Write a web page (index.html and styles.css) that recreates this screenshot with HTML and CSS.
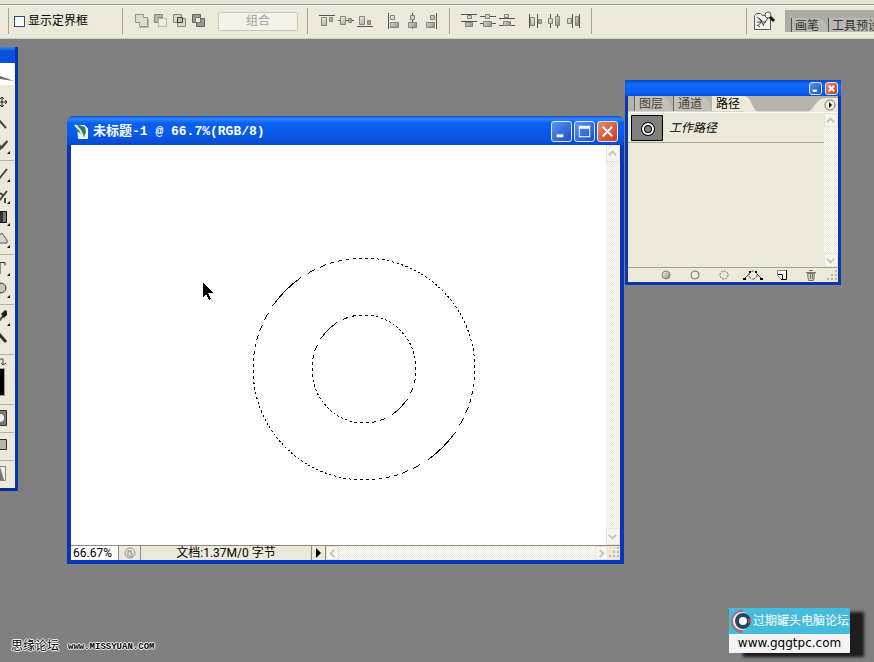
FILE: index.html
```html
<!DOCTYPE html>
<html lang="zh-CN">
<head>
  <meta charset="UTF-8">
  <title>未标题-1</title>
  <link rel="stylesheet" href="styles.css">
</head>
<body>
  <svg class="defs" aria-hidden="true">
    <defs>
      <linearGradient id="metal" x1="0" y1="0" x2="1" y2="1">
        <stop offset="0" stop-color="#f4f3e8"/>
        <stop offset="1" stop-color="#8f8e84"/>
      </linearGradient>
      <!-- 蚂蚁线:斜向条纹 -->
      <linearGradient id="ants" gradientUnits="userSpaceOnUse" x1="0" y1="0" x2="3" y2="3" spreadMethod="repeat">
        <stop offset="0.5" stop-color="#000"/>
        <stop offset="0.5" stop-color="#fff"/>
      </linearGradient>
      <linearGradient id="ants-inner" gradientUnits="userSpaceOnUse" x1="1" y1="2" x2="4" y2="5" spreadMethod="repeat">
        <stop offset="0.5" stop-color="#000"/>
        <stop offset="0.5" stop-color="#fff"/>
      </linearGradient>
      <symbol id="up" viewBox="0 0 12 12"><path d="M2 8l4-4 4 4" fill="none" stroke="#c4c4bc" stroke-width="2"/></symbol>
      <symbol id="down" viewBox="0 0 12 12"><path d="M2 4l4 4 4-4" fill="none" stroke="#c4c4bc" stroke-width="2"/></symbol>
      <symbol id="left" viewBox="0 0 12 12"><path d="M8 2L4 6l4 4" fill="none" stroke="#c4c4bc" stroke-width="2"/></symbol>
      <symbol id="right" viewBox="0 0 12 12"><path d="M4 2l4 4-4 4" fill="none" stroke="#c4c4bc" stroke-width="2"/></symbol>
      <symbol id="grip" viewBox="0 0 12 12"><path d="M9 1h2v2H9zM9 5h2v2H9zM9 9h2v2H9zM5 5h2v2H5zM5 9h2v2H5zM1 9h2v2H1z" fill="#bdbaa8"/></symbol>
    </defs>
  </svg>

  <header class="options-bar">
    <label class="bounding-box"><input type="checkbox"> 显示定界框</label>
    <div class="group path-ops">
      <button class="icon-btn" aria-label="添加"><svg viewBox="0 0 16 16"><path d="M1.5 1.5h8v3h4v9h-8v-4h-4z" fill="#dddbcd" stroke="#96958a"/><path d="M6 14.5h8.500V6" fill="none" stroke="#b5b3a6"/></svg></button>
      <button class="icon-btn" aria-label="减去"><svg viewBox="0 0 16 16"><path d="M1.5 9.5v-8h8v3h-4v5z" fill="#b8b6a8" stroke="#88877c"/><path d="M5.5 5.5h8v8h-8z" fill="#eeecdf" stroke="#bbb9ab"/></svg></button>
      <button class="icon-btn" aria-label="交叉"><svg viewBox="0 0 16 16"><path d="M1.5 1.5h8v8h-8zM5.5 5.5h8v8h-8z" fill="#d8d6c8" stroke="#88877c"/><path d="M5.5 4.5h5v5h-5z" fill="#c0beb0" stroke="#3c3c36"/></svg></button>
      <button class="icon-btn" aria-label="排除"><svg viewBox="0 0 16 16"><path d="M1.5 1.5h8v8h-8zM5.5 5.5h8v8h-8z" fill="#9a988c" stroke="#66655c"/><path d="M4.5 4.5h5v5h-5z" fill="#e8e6d8" stroke="#77766c"/></svg></button>
      <button class="combine" disabled>组合</button>
    </div>
    <div class="group">
      <button class="icon-btn" aria-label="顶对齐"><svg viewBox="0 0 16 16"><path d="M0 2.5h16" stroke="#55544c"/><path d="M2.5 4.5h5v8h-5zM10.5 4.5h3v4h-3z" fill="url(#metal)" stroke="#85847a"/></svg></button>
      <button class="icon-btn" aria-label="垂直居中"><svg viewBox="0 0 16 16"><path d="M0 7.5h16" stroke="#55544c"/><path d="M2.5 3.5h5v8h-5zM10.5 5.5h3v4h-3z" fill="url(#metal)" stroke="#85847a"/></svg></button>
      <button class="icon-btn" aria-label="底对齐"><svg viewBox="0 0 16 16"><path d="M0 13.5h16" stroke="#55544c"/><path d="M2.5 3.5h5v8h-5zM10.5 7.5h3v4h-3z" fill="url(#metal)" stroke="#85847a"/></svg></button>
      <span class="space"></span>
      <button class="icon-btn" aria-label="左对齐"><svg viewBox="0 0 16 16"><path d="M2.5 0v16" stroke="#55544c"/><path d="M4.5 2.5h4v4h-4zM4.5 9.5h8v5h-8z" fill="url(#metal)" stroke="#85847a"/></svg></button>
      <button class="icon-btn" aria-label="水平居中"><svg viewBox="0 0 16 16"><path d="M7.5 0v16" stroke="#55544c"/><path d="M5.5 2.5h4v4h-4zM3.5 9.5h8v5h-8z" fill="url(#metal)" stroke="#85847a"/></svg></button>
      <button class="icon-btn" aria-label="右对齐"><svg viewBox="0 0 16 16"><path d="M12.5 0v16" stroke="#55544c"/><path d="M6.5 2.5h4v4h-4zM2.5 9.5h8v5h-8z" fill="url(#metal)" stroke="#85847a"/></svg></button>
    </div>
    <div class="group">
      <button class="icon-btn" aria-label="按顶分布"><svg viewBox="0 0 16 16"><path d="M0 1.5h16M0 8.5h16" stroke="#55544c"/><path d="M6.5 2.5h4v3h-4zM4.5 9.5h7v4h-7z" fill="url(#metal)" stroke="#85847a"/></svg></button>
      <button class="icon-btn" aria-label="垂直分布"><svg viewBox="0 0 16 16"><path d="M0 3.5h16M0 10.5h16" stroke="#55544c"/><path d="M5.5 1.5h4v4h-4zM3.5 8.5h8v5h-8z" fill="url(#metal)" stroke="#85847a"/></svg></button>
      <button class="icon-btn" aria-label="按底分布"><svg viewBox="0 0 16 16"><path d="M0 5.5h16M0 12.5h16" stroke="#55544c"/><path d="M5.5 1.5h4v3h-4zM4.5 8.5h7v4h-7z" fill="url(#metal)" stroke="#85847a"/></svg></button>
      <span class="space"></span>
      <button class="icon-btn" aria-label="按左分布"><svg viewBox="0 0 16 16"><path d="M1.5 1v14M9.5 1v14" stroke="#55544c"/><path d="M2.5 4.5h4v8h-4zM10.5 6.5h3v4h-3z" fill="url(#metal)" stroke="#85847a"/></svg></button>
      <button class="icon-btn" aria-label="水平分布"><svg viewBox="0 0 16 16"><path d="M3.5 1v14M10.5 1v14" stroke="#55544c"/><path d="M1.5 5.5h4v5h-4zM8.500 3.5h4v9h-4z" fill="url(#metal)" stroke="#85847a"/></svg></button>
      <button class="icon-btn" aria-label="按右分布"><svg viewBox="0 0 16 16"><path d="M6.5 1v14M13.5 1v14" stroke="#55544c"/><path d="M1.5 5.5h4v5h-4zM9.5 3.5h3v9h-3z" fill="url(#metal)" stroke="#85847a"/></svg></button>
    </div>
    <div class="group rest"></div>
    <div class="group browse">
      <button class="browse-btn" aria-label="文件浏览器"><svg viewBox="0 0 24 22"><path d="M2.5 5.5l2-2h4l2 2h8v14h-16z" fill="#f2f1ea" stroke="#55555a"/><path d="M5 7l5 4-4 5M11 15l5-7M7 8l5 8M5 12h9M8 17l-3-2" stroke="#44444c" fill="none"/><circle cx="16" cy="5" r="3" fill="#f8f8f4" stroke="#555"/><path d="M18 7l4 4" stroke="#111" stroke-width="3"/></svg></button>
    </div>
    <nav class="well">
      <button>画笔</button>
      <button>工具预设</button>
    </nav>
  </header>

  <main class="desktop">
    <aside class="toolbox">
      <div class="tb-title"></div>
      <div class="tb-logo"><svg viewBox="0 0 14 20"><path d="M0 13l14 5-14-2z" fill="#667"/></svg></div>
      <div class="tools">
        <button aria-label="移动"><svg viewBox="0 0 14 20"><path d="M-4 9H7M2 4v10M5 7l2 2-2 2M0 6l2-2 2 2M0 12l2 2 2-2" stroke="#222" fill="none"/></svg></button>
        <button aria-label="魔棒"><svg viewBox="0 0 14 20"><path d="M-2 4l8 9" stroke="#444" stroke-width="2"/></svg></button>
        <button class="more" aria-label="切片"><svg viewBox="0 0 14 20"><path d="M-1 5l2 4 6-6 1 2-5 6-4 3z" fill="#45453f"/></svg></button>
      </div>
      <div class="tools">
        <button class="more" aria-label="画笔"><svg viewBox="0 0 14 20"><path d="M-1 14L7 4" stroke="#444" stroke-width="2"/></svg></button>
        <button class="more" aria-label="历史画笔"><svg viewBox="0 0 14 20"><path d="M-1 14L7 4M0 6l3 2M5 11v5" fill="none" stroke="#444" stroke-width="2"/></svg></button>
        <button class="more" aria-label="渐变"><svg viewBox="0 0 14 20"><path d="M-5 2.5H6.5v11H-5z" fill="#333" stroke="#111"/><path d="M3 3h3v10H3z" fill="#777"/></svg></button>
        <button class="more" aria-label="减淡"><svg viewBox="0 0 14 20"><path d="M-2 12V5l4-3 5 7v3z" fill="#d2d4d2" stroke="#555"/></svg></button>
      </div>
      <div class="tools">
        <button class="more" aria-label="文字"><svg viewBox="0 0 14 20"><path d="M-5 3.5h10v3M0 4v11" fill="none" stroke="#333"/></svg></button>
        <button class="more" aria-label="形状"><svg viewBox="0 0 14 20"><ellipse cx="0" cy="7" rx="6" ry="5" fill="#c4c4bc" stroke="#333"/></svg></button>
      </div>
      <div class="tools">
        <button class="more" aria-label="吸管"><svg viewBox="0 0 14 20"><path d="M-2 13L4 6" stroke="#444" stroke-width="2"/><path d="M1 5l4-4 2 1v4l-3 3z" fill="#222"/></svg></button>
        <button aria-label="缩放"><svg viewBox="0 0 14 20"><path d="M-1 3l7 8" stroke="#333" stroke-width="3"/></svg></button>
      </div>
      <div class="colors">
        <svg viewBox="0 0 14 12"><path d="M-2 2h5v6M1 6l2 2 3-2" fill="none" stroke="#444"/></svg>
        <span class="swatch"></span>
      </div>
      <div class="tools"><button aria-label="快速蒙版"><svg viewBox="0 0 14 20"><path d="M-2 1.5H6.5v15H-2z" fill="#777" stroke="#333"/><circle cx="0" cy="9" r="4" fill="#eee"/></svg></button></div>
      <div class="tools"><button aria-label="屏幕模式"><svg viewBox="0 0 14 20"><path d="M-2 2.5H6.5v10H-2z" fill="#b4b4ac" stroke="#333"/></svg></button></div>
      <div class="tools"><button aria-label="转到"><svg viewBox="0 0 14 20"><path d="M-2 1.5H5.5v14H-2z" fill="#eee" stroke="#888"/><path d="M0 2l4 13H0z" fill="#777"/></svg></button></div>
    </aside>

    <section class="window document">
      <div class="title-bar">
        <svg class="doc-icon" viewBox="0 0 16 16"><path d="M3.5 1.5h7l3 3v10h-9z" fill="#eaf3ee" stroke="#fff"/><path d="M1 3l4-2 6 2 1 5-2 5-4-4-4-2z" fill="#2a776f"/><path d="M1 1l5 5 3 6" fill="none" stroke="#d5efe6" stroke-width="2"/></svg>
        <h1>未标题-1 @ 66.7%(RGB/8)</h1>
        <button class="win-btn" aria-label="最小化"><svg viewBox="0 0 20 20"><path d="M5 13h7v3H5z" fill="#fff"/></svg></button>
        <button class="win-btn" aria-label="最大化"><svg viewBox="0 0 20 20"><path d="M4 4h12v12H4zM5 7v8h10V7z" fill="#fff" fill-rule="evenodd"/></svg></button>
        <button class="win-btn close" aria-label="关闭"><svg viewBox="0 0 20 20"><path d="M5 5l10 10M15 5L5 15" stroke="#fff" stroke-width="2"/></svg></button>
      </div>
      <div class="doc-body">
        <svg class="canvas" viewBox="0 0 535 400" shape-rendering="crispEdges">
          <circle cx="293" cy="224" r="111" fill="none" stroke="url(#ants)"/>
          <ellipse cx="293" cy="224" rx="52" ry="54" fill="none" stroke="url(#ants-inner)"/>
          <path d="M132 138v14l3-3 3 6 2-1-3-6h5z" fill="#000"/>
        </svg>
        <div class="scroll vertical">
          <button aria-label="向上"><svg><use href="#up"/></svg></button>
          <button aria-label="向下"><svg><use href="#down"/></svg></button>
        </div>
      </div>
      <div class="status-bar">
        <input class="zoom" aria-label="缩放比例" value="66.67%">
        <span class="version"><svg viewBox="0 0 14 14"><circle cx="7" cy="7" r="5" fill="#e6e4da" stroke="#99988e"/><path d="M5 10V5h3M8 5v3h2M6 10h4" fill="none" stroke="#88877c"/></svg></span>
        <span class="doc-size">文档:1.37M/0 字节</span>
        <button class="play" aria-label="菜单"><svg viewBox="0 0 12 12"><path d="M4 1l5 5-5 5z"/></svg></button>
        <div class="scroll horizontal">
          <button aria-label="向左"><svg><use href="#left"/></svg></button>
          <button aria-label="向右"><svg><use href="#right"/></svg></button>
        </div>
        <svg class="grip"><use href="#grip"/></svg>
      </div>
    </section>

    <section class="window panel">
      <div class="panel-title">
        <button class="win-btn" aria-label="最小化"><svg viewBox="0 0 20 20"><path d="M5 12h8v4H5z" fill="#fff"/></svg></button>
        <button class="win-btn close" aria-label="关闭"><svg viewBox="0 0 20 20"><path d="M5 5l10 10M15 5L5 15" stroke="#fff" stroke-width="4"/></svg></button>
      </div>
      <div class="tabs">
        <button class="tab">图层</button>
        <button class="tab">通道</button>
        <button class="tab active">路径</button>
        <svg class="slope" viewBox="0 0 16 16"><path d="M0 0c8 0 8 16 16 16H0z" fill="#ece9d8"/></svg>
        <button class="panel-menu" aria-label="面板菜单"><svg viewBox="0 0 32 16"><path d="M0 16C8 16 9 2 20 2h12v14z" fill="#ece9d8"/><circle cx="24" cy="9" r="5" fill="#f4f2ea" stroke="#777"/><path d="M23 6l3 3-3 3z"/></svg></button>
      </div>
      <div class="panel-body">
        <div class="path-list">
          <div class="path-row">
            <svg class="thumb" viewBox="0 0 32 26"><path d="M.5.5h31v25H.5z" fill="#808080" stroke="#000"/><circle cx="17" cy="14" r="5" fill="none" stroke="#000" stroke-width="4"/><circle cx="17" cy="14" r="5" fill="none" stroke="#fff" stroke-width="2"/></svg>
            <span>工作路径</span>
          </div>
        </div>
        <div class="scroll vertical">
          <button aria-label="向上"><svg><use href="#up"/></svg></button>
          <button aria-label="向下"><svg><use href="#down"/></svg></button>
        </div>
      </div>
      <div class="panel-footer">
        <button aria-label="填充路径"><svg viewBox="0 0 20 14"><circle cx="10" cy="7" r="4" fill="url(#metal)" stroke="#85847a"/></svg></button>
        <button aria-label="描边路径"><svg viewBox="0 0 20 14"><circle cx="10" cy="7" r="4" fill="#f0eee2" stroke="#77766e"/></svg></button>
        <button aria-label="载入选区"><svg viewBox="0 0 20 14"><circle cx="10" cy="7" r="4" fill="none" stroke="#77766e" stroke-dasharray="2 1"/></svg></button>
        <button aria-label="生成路径"><svg viewBox="0 0 20 14"><path d="M1 11l5-5M19 11l-5-5" stroke="#333"/><circle cx="10" cy="7" r="4" fill="#eee" stroke="#55544c" stroke-dasharray="3 1"/><path d="M0 10h3v2H0zM17 10h3v2h-3zM6 3h2v2H6zM12 3h2v2h-2z"/></svg></button>
        <button aria-label="新建路径"><svg viewBox="0 0 20 14"><path d="M5.5 2.5h9v9h-5l-4-4z" fill="#fff" stroke="#88877c"/><path d="M14.5 2v9.500H9M6 6.500h4.500V11" fill="none" stroke="#000"/></svg></button>
        <button aria-label="删除路径"><svg viewBox="0 0 20 14"><path d="M6.5 5.5h7l-1 7h-5zM5 4.5h10M8 2.5h4M9.5 6v5M11.5 6v5" fill="#d0cec2" stroke="#77766c"/></svg></button>
        <svg class="grip"><use href="#grip"/></svg>
      </div>
    </section>
  </main>

  <footer class="credits">
    <span>思缘论坛</span>
    <a href="#missyuan">www.MISSYUAN.COM</a>
  </footer>

  <a class="forum" href="#gqgtpc">
    <span class="forum-name"><svg viewBox="0 0 24 24"><path d="M14 2a10 10 0 1 0 0 21" fill="none" stroke="#a8707c" stroke-width="3"/><circle cx="13" cy="12" r="9" fill="#f4f8fa"/><circle cx="14" cy="12" r="6" fill="#fff" stroke="#24495c" stroke-width="4"/><path d="M19 10h3v4h-3z" fill="#c04858"/></svg>过期罐头电脑论坛</span>
    <span class="forum-url">www.gqgtpc.com</span>
  </a>
</body>
</html>
```

FILE: styles.css
```css
* {
  box-sizing: border-box;
}

body {
  margin: 0;
  min-height: 100vh;
  background: #808080;
  font-family: Roboto, "Noto Sans CJK SC", sans-serif;
  font-size: 12px;
  line-height: 16px;
  color: #000;
  overflow: hidden;
}

button {
  margin: 0;
  padding: 0;
  border: none;
  background: none;
  font: inherit;
  color: inherit;
}

svg {
  display: block;
}

.defs {
  position: absolute;
  width: 0;
  height: 0;
}

/* 选项栏 */
.options-bar {
  display: flex;
  height: 39px;
  padding: 4px 0 3px 8px;
  background: linear-gradient(#e6e3d4 4px, #96958a 4px, #96958a 5px, #fbfaf0 5px, #fbfaf0 6px, #ece9d8 6px);
  border-bottom: 1px solid #d2cfc0;
}

.bounding-box,
.group {
  display: flex;
  align-items: center;
  margin-top: 4px;
  height: 26px;
  border-left: 1px solid #a5a395;
  padding-left: 11px;
  white-space: nowrap;
}

.bounding-box {
  width: 114px;
  padding-left: 5px;
  gap: 3px;
}

.bounding-box input {
  appearance: none;
  width: 11px;
  height: 11px;
  margin: 0;
  border: 1px solid #1c5180;
  background: #f8f8f6;
}

.group {
  gap: 3px;
  padding-right: 9px;
}

.path-ops {
  width: 185px;
}

.icon-btn {
  width: 16px;
  height: 16px;
}

.space {
  width: 7px;
}

.combine {
  width: 80px;
  height: 19px;
  margin-left: 8px;
  border: 1px solid #cbc8b8;
  border-radius: 2px;
  background: #f4f2e8;
  color: #a5a395;
}

.rest {
  flex: 1;
}

.browse {
  padding: 0 6px 0 5px;
}

.browse-btn {
  width: 24px;
  height: 22px;
}

.well {
  display: flex;
  align-items: flex-end;
  width: 89px;
  height: 22px;
  margin: 6px 0 0 3px;
  background: #acaba8;
  overflow: hidden;
  white-space: nowrap;
}

.well button {
  height: 14px;
  padding: 0 9px 0 3px;
  margin-left: 6px;
  border-left: 1px solid #55544c;
  border-top-right-radius: 12px;
  background: #b9b8b2;
  color: #33332f;
  flex: none;
}

.well button + button {
  margin-left: 0;
}

/* 工具箱 */
.toolbox {
  position: absolute;
  left: 0;
  top: 47px;
  width: 18px;
  padding-right: 1px;
  border-right: 3px solid #0a36a8;
  border-bottom: 3px solid #0a2a8c;
  background: #ece9d8;
}

.tb-title {
  height: 16px;
  margin-right: -1px;
  background: linear-gradient(#3a86f4, #0a50dc 4px, #0a50dc);
}

.tb-logo {
  height: 22px;
  background: #fff;
}

.tb-logo svg {
  width: 14px;
  height: 20px;
}

.tools {
  padding: 3px 0 2px;
  border-bottom: 1px solid #b5b2a2;
}

.tools button {
  display: block;
  position: relative;
  width: 13px;
  height: 22px;
}

.tools svg {
  width: 14px;
  height: 20px;
}

.tb-logo + .tools {
  padding-top: 7px;
}

.tools:last-child {
  border-bottom: none;
}

.more::after {
  content: "";
  position: absolute;
  right: 3px;
  bottom: 4px;
  border-left: 3px solid transparent;
  border-bottom: 3px solid #000;
}

.colors {
  height: 50px;
  padding-top: 2px;
  border-bottom: 1px solid #b5b2a2;
}

.colors svg {
  width: 14px;
  height: 12px;
}

.swatch {
  display: block;
  width: 4px;
  height: 26px;
  background: #000;
  outline: 1px solid #999;
}

/* 窗口 */
.window {
  position: absolute;
  display: flex;
  flex-direction: column;
  border: 3px solid #0a36b4;
  border-top: none;
}

.document {
  left: 67px;
  top: 116px;
  width: 557px;
  height: 448px;
  border-width: 0 4px 4px;
  border-radius: 7px 7px 0 0;
  background: #0a36b4;
}

.title-bar {
  display: flex;
  align-items: center;
  gap: 3px;
  height: 29px;
  margin: 0 -4px;
  padding: 2px 6px 0 7px;
  border-radius: 7px 7px 0 0;
  background: linear-gradient(#0a50d8, #3088f8 3px, #0860f0 7px, #0858e8 20px, #0a48cc);
}

.doc-icon {
  width: 16px;
  height: 16px;
}

h1 {
  flex: 1;
  margin: 0;
  font: bold 13px/16px "Liberation Mono", "Noto Sans CJK SC", monospace;
  color: #fff;
  white-space: nowrap;
}

.win-btn {
  width: 21px;
  height: 21px;
  border: 1px solid #dfe8fa;
  border-radius: 3px;
  background: linear-gradient(135deg, #5c94f0, #1c4cc8);
}

.win-btn.close {
  background: linear-gradient(135deg, #e88c6c, #c43c1c);
}

.win-btn + .win-btn {
  margin-left: -1px;
}

.doc-body {
  flex: 1;
  display: flex;
  min-height: 0;
  background: #fff;
}

.canvas {
  flex: 1;
  min-width: 0;
}

.scroll {
  display: flex;
  justify-content: space-between;
  background: repeating-conic-gradient(#fff 0 25%, #e9e7da 0 50%) 0 0 / 2px 2px;
}

.scroll button {
  width: 13px;
  height: 14px;
  padding: 1px 0;
  border: 1px solid #e6e4da;
  background: #f6f5f0;
}

.scroll svg {
  width: 11px;
  height: 11px;
}

.vertical {
  flex-direction: column;
  width: 14px;
}

.vertical button {
  width: 14px;
}

.doc-body .vertical button {
  height: 17px;
}

.horizontal {
  flex: 1;
}

.grip {
  width: 12px;
  height: 12px;
}

.status-bar {
  display: flex;
  height: 15px;
  border-top: 1px solid #8c8b80;
  background: #ece9d8;
  line-height: 14px;
}

.zoom {
  width: 48px;
  padding: 0 2px;
  border: none;
  border-right: 1px solid #8c8b80;
  background: #fff;
  font: inherit;
}

.version {
  width: 22px;
  padding-left: 4px;
  border-right: 1px solid #8c8b80;
}

.version svg {
  width: 14px;
  height: 14px;
}

.doc-size {
  width: 171px;
  border-right: 1px solid #8c8b80;
  text-align: center;
  white-space: nowrap;
}

.play {
  width: 14px;
  border-right: 1px solid #8c8b80;
}

.play svg {
  width: 12px;
  height: 12px;
}

/* 路径面板 */
.panel {
  left: 625px;
  top: 80px;
  width: 216px;
  height: 205px;
  background: #ece9d8;
}

.panel-title {
  display: flex;
  justify-content: flex-end;
  align-items: center;
  gap: 4px;
  height: 16px;
  margin: 0 -3px;
  padding-right: 3px;
  background: linear-gradient(#0a48c8, #0c68f8 4px, #0a60f0 12px, #0a50dc);
}

.panel-title .win-btn {
  width: 13px;
  height: 13px;
}

.tabs {
  display: flex;
  height: 16px;
  padding-left: 6px;
  background: #b4b3ae;
  border-bottom: 1px solid #d8d6c8;
  line-height: 17px;
}

.tab {
  width: 38px;
  padding-left: 4px;
  border-left: 1px solid #66655c;
  border-top-right-radius: 14px;
  background: #c2c0b8;
  color: #44443e;
  text-align: left;
}

.tab + .tab {
  margin-left: 1px;
}

.tab.active {
  width: 32px;
  border-left: 0;
  border-radius: 0;
  background: #ece9d8;
  color: #000;
}

.slope {
  width: 16px;
  height: 16px;
}

.panel-menu {
  margin-left: auto;
}

.panel-menu svg {
  width: 32px;
  height: 16px;
}

.panel-body {
  flex: 1;
  display: flex;
  border-top: 1px solid #fbfaf2;
}

.path-list {
  flex: 1;
}

.path-row {
  display: flex;
  align-items: center;
  gap: 6px;
  height: 30px;
  padding: 0 3px;
  border-bottom: 1px solid #a5a395;
  font-style: italic;
}

.thumb {
  width: 32px;
  height: 26px;
}

.panel-footer {
  display: flex;
  align-items: center;
  justify-content: flex-end;
  gap: 9px;
  height: 15px;
  border-top: 1px solid #a5a395;
}

.panel-footer button,
.panel-footer button svg {
  width: 20px;
  height: 14px;
}

.panel-footer .grip {
  margin-left: -4px;
}

/* 水印 */
.credits {
  position: absolute;
  left: 11px;
  bottom: 6px;
  display: flex;
  gap: 9px;
  color: #000;
  text-shadow: 1px 0 #fff, -1px 0 #fff, 0 1px #fff, 0 -1px #fff;
}

.credits a {
  color: #000;
  text-decoration: none;
  font: bold 9px/18px "Liberation Mono", monospace;
}

.forum {
  position: absolute;
  right: 24px;
  bottom: 9px;
  width: 121px;
  color: #000;
  text-decoration: none;
  white-space: nowrap;
  box-shadow: 14px 4px 3px #1c1c1c;
}

.forum-name {
  display: flex;
  align-items: center;
  height: 26px;
  background: #46bcdc;
  color: #fff;
  line-height: 28px;
}

.forum-name svg {
  width: 24px;
  height: 24px;
}

.forum-url {
  display: block;
  height: 19px;
  background: #f4f4f4;
  font: 12px/19px "DejaVu Sans", sans-serif;
  text-align: center;
}
```
